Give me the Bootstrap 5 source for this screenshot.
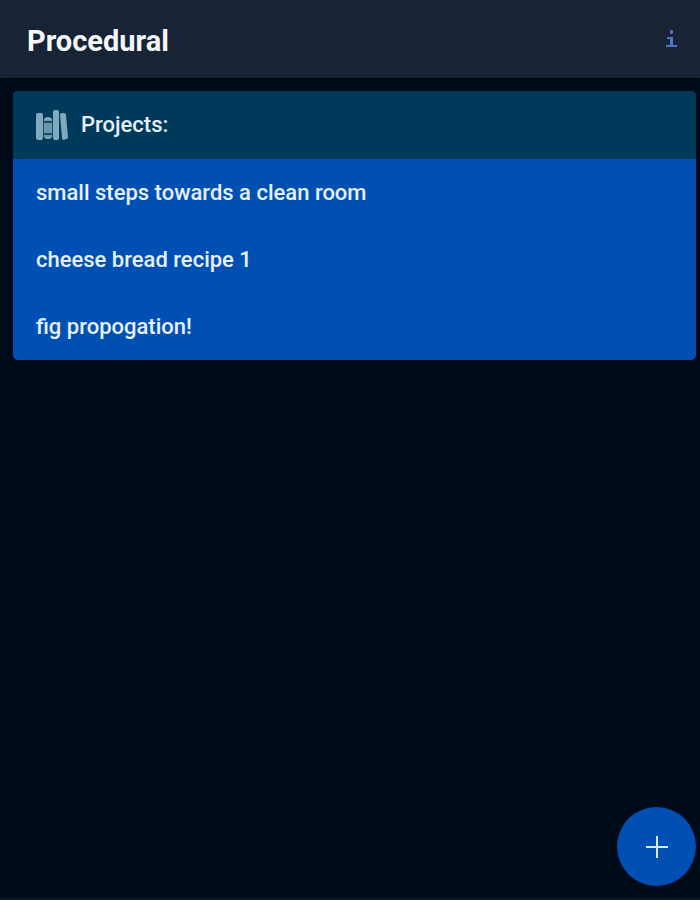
<!DOCTYPE html>
<html lang="en">
<head>
<meta charset="utf-8">
<meta name="viewport" content="width=device-width, initial-scale=1">
<title>Procedural</title>
<link href="https://cdn.jsdelivr.net/npm/bootstrap@5.3.0/dist/css/bootstrap.min.css" rel="stylesheet">
<style>
  body { background: #000b1a; color: #e6f0ff; font-family: Roboto, "Liberation Sans", sans-serif; font-size: 22px; font-weight: 500; line-height: 27px; border-bottom: 2px solid #0a1422; }
  .app-bar { background: #182436; min-height: 78px; padding: 0 20px 0 27px; box-shadow: 0 1px 4px #00050d; }
  .app-title { font-size: 29px; line-height: 40px; font-weight: 700; padding-top: 3px; color: #f4f7fc; }
  .info-link { color: #4a74d4; }
  .page-body { padding: 13px 4px 0 13px; }
  .project-panel { border-radius: 5px; background: #0050b3; }
  .panel-head { padding: 18px 23px; background: #003a5b; gap: 12px; font-size: 22px; font-weight: 500; line-height: 32px; }
  .project-row { padding: 20px 23px; color: inherit; }
  .project-row:hover { background: #0659bf; color: #fff; }
  .add-btn { width: 79px; height: 79px; margin: 0 4px 12px auto; background: #0050b3; color: #d6e7ff; }
</style>
<script src="https://cdn.jsdelivr.net/npm/bootstrap@5.3.0/dist/js/bootstrap.bundle.min.js"></script>
</head>
<body class="d-flex flex-column min-vh-100">
<header class="app-bar d-flex align-items-center justify-content-between">
  <h1 class="app-title m-0">Procedural</h1>
  <a href="#about" class="info-link d-flex" aria-label="Information">
    <svg width="18" height="22" viewBox="0 0 18 22" fill="none" stroke="currentColor" stroke-width="2" aria-hidden="true"><path d="M5 10H10M4 18H15"/><rect x="8" y="2" width="3" height="4" rx="1" fill="currentColor" stroke="none"/><path d="M9.5 9V19" stroke-width="3"/></svg>
  </a>
</header>
<main class="page-body">
  <section class="project-panel overflow-hidden">
    <h2 class="panel-head d-flex align-items-center m-0">
      <svg class="flex-shrink-0" width="33" height="32" viewBox="0 0 33 32" fill="#80a9bd" aria-hidden="true">
        <rect x="0" y="4" width="7" height="27" rx="2"/>
        <path d="M8 11Q8 8 12 8Q16 8 16 11V12H8ZM8 14H16V24H8ZM8 26H16V27Q16 30 12 30Q8 30 8 27Z"/>
        <path d="M7 11H17V28H7Z" fill="#49788e" opacity=".35"/>
        <rect x="17" y="1" width="6" height="30" rx="2"/>
        <path d="M24 6Q24 4 26 4L28 4Q30 4 30 6L32 28Q32 30 30 30L28 31Q26 31 26 29Z"/>
      </svg>
      <span>Projects:</span>
    </h2>
    <nav aria-label="Projects">
      <a href="#clean-room" class="project-row d-block text-decoration-none">small steps towards a clean room</a>
      <a href="#cheese-bread" class="project-row d-block text-decoration-none">cheese bread recipe 1</a>
      <a href="#fig" class="project-row d-block text-decoration-none">fig propogation!</a>
    </nav>
  </section>
</main>
<button type="button" class="add-btn btn rounded-circle border-0 p-0 mt-auto d-flex align-items-center justify-content-center" aria-label="Add project">
  <svg width="22" height="22" viewBox="0 0 22 22" fill="none" stroke="currentColor" stroke-width="2" aria-hidden="true"><path d="M11 0V22M0 11H22"/></svg>
</button>
</body>
</html>
